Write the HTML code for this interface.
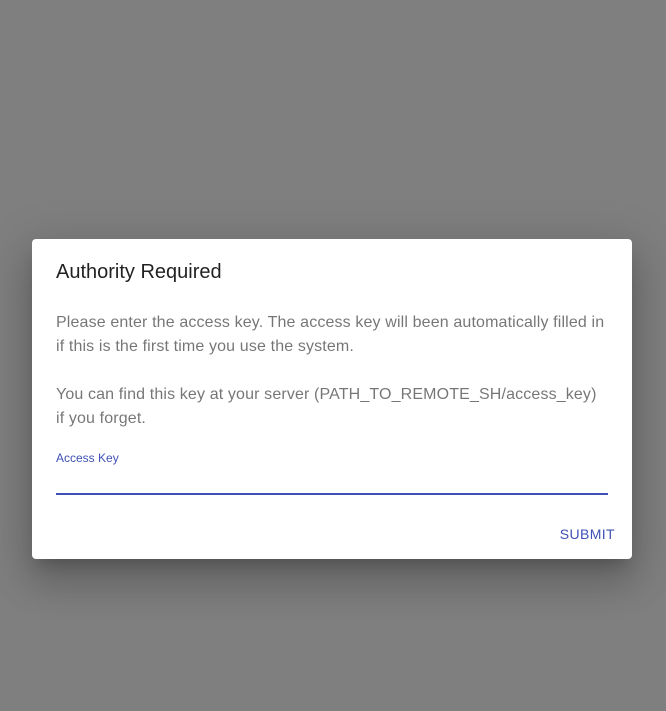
<!DOCTYPE html>
<html><head><style>
body{margin:0;width:666px;height:711px;background:#7f7f7f;font-family:"Liberation Sans",Arial,sans-serif;position:relative;overflow:hidden}
.d{position:absolute;left:32px;top:239px;width:600px;height:320px;background:#fff;border-radius:4px;box-shadow:0 11px 15px -7px rgba(0,0,0,.2),0 24px 38px 3px rgba(0,0,0,.14),0 9px 46px 8px rgba(0,0,0,.12)}
.t{position:absolute;left:24px;top:21px;font-size:20px;color:rgba(0,0,0,.87);line-height:24px}
.p{position:absolute;left:24px;font-size:16px;line-height:24px;color:rgba(0,0,0,.54);width:560px;letter-spacing:.14px;white-space:nowrap}
.l{position:absolute;left:24px;top:212px;font-size:12px;color:#3f51b5}
.u{position:absolute;left:24px;top:254px;width:552px;height:2px;background:#3f51b5}
.b{position:absolute;right:17px;top:287px;font-size:14px;color:#3f51b5;letter-spacing:.4px}
</style></head><body>
<div class="d">
<div class="t">Authority Required</div>
<div class="p" style="top:72px">Please enter the access key. The access key will been automatically filled in<br>if this is the first time you use the system.</div>
<div class="p" style="top:144px">You can find this key at your server (PATH_TO_REMOTE_SH/access_key)<br>if you forget.</div>
<div class="l">Access Key</div>
<div class="u"></div>
<div class="b">SUBMIT</div>
</div>
</body></html>
